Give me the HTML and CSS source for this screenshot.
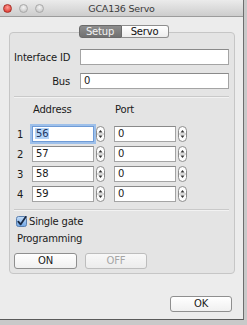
FILE: index.html
```html
<!DOCTYPE html>
<html lang="en">
<head>
    <meta charset="UTF-8">
    <meta name="viewport" content="width=device-width, initial-scale=1.0">
    <title>GCA136 Servo</title>
    <link rel="stylesheet" href="styles.css">
</head>
<body>
    <div class="window">
        <div class="titlebar">
            <div class="lights">
                <span class="light close"></span>
                <span class="light"></span>
                <span class="light"></span>
            </div>
            <div class="title">GCA136 Servo</div>
            <div></div>
        </div>

        <div class="content">
            <div class="tabs">
                <span class="tab active">Setup</span>
                <span class="tab">Servo</span>
            </div>

            <div class="group">
                <div class="form-row">
                    <span class="label">Interface ID</span>
                    <div class="field wide"></div>
                </div>
                <div class="form-row">
                    <span class="label">Bus</span>
                    <div class="field wide">0</div>
                </div>

                <div class="sep"></div>

                <div class="num-head">
                    <span class="h-address">Address</span>
                    <span>Port</span>
                </div>

                <div class="num-rows">
                    <div class="num-row">
                        <span class="num">1</span>
                        <div class="field small focused"><span class="selected">56</span></div>
                        <svg class="stepper" width="9" height="16" viewBox="0 0 9 16"><rect x="0.5" y="0.5" width="8" height="15" rx="4" fill="#fdfdfd" stroke="#8c8c8c"/><line x1="1" y1="8" x2="8" y2="8" stroke="#b5b5b5"/><path d="M4.5 4 L6.5 6.5 L2.5 6.5 Z" fill="#333"/><path d="M4.5 12 L6.5 9.5 L2.5 9.5 Z" fill="#333"/></svg>
                        <div class="field small port">0</div>
                        <svg class="stepper" width="9" height="16" viewBox="0 0 9 16"><rect x="0.5" y="0.5" width="8" height="15" rx="4" fill="#fdfdfd" stroke="#8c8c8c"/><line x1="1" y1="8" x2="8" y2="8" stroke="#b5b5b5"/><path d="M4.5 4 L6.5 6.5 L2.5 6.5 Z" fill="#333"/><path d="M4.5 12 L6.5 9.5 L2.5 9.5 Z" fill="#333"/></svg>
                    </div>
                    <div class="num-row">
                        <span class="num">2</span>
                        <div class="field small">57</div>
                        <svg class="stepper" width="9" height="16" viewBox="0 0 9 16"><rect x="0.5" y="0.5" width="8" height="15" rx="4" fill="#fdfdfd" stroke="#8c8c8c"/><line x1="1" y1="8" x2="8" y2="8" stroke="#b5b5b5"/><path d="M4.5 4 L6.5 6.5 L2.5 6.5 Z" fill="#333"/><path d="M4.5 12 L6.5 9.5 L2.5 9.5 Z" fill="#333"/></svg>
                        <div class="field small port">0</div>
                        <svg class="stepper" width="9" height="16" viewBox="0 0 9 16"><rect x="0.5" y="0.5" width="8" height="15" rx="4" fill="#fdfdfd" stroke="#8c8c8c"/><line x1="1" y1="8" x2="8" y2="8" stroke="#b5b5b5"/><path d="M4.5 4 L6.5 6.5 L2.5 6.5 Z" fill="#333"/><path d="M4.5 12 L6.5 9.5 L2.5 9.5 Z" fill="#333"/></svg>
                    </div>
                    <div class="num-row">
                        <span class="num">3</span>
                        <div class="field small">58</div>
                        <svg class="stepper" width="9" height="16" viewBox="0 0 9 16"><rect x="0.5" y="0.5" width="8" height="15" rx="4" fill="#fdfdfd" stroke="#8c8c8c"/><line x1="1" y1="8" x2="8" y2="8" stroke="#b5b5b5"/><path d="M4.5 4 L6.5 6.5 L2.5 6.5 Z" fill="#333"/><path d="M4.5 12 L6.5 9.5 L2.5 9.5 Z" fill="#333"/></svg>
                        <div class="field small port">0</div>
                        <svg class="stepper" width="9" height="16" viewBox="0 0 9 16"><rect x="0.5" y="0.5" width="8" height="15" rx="4" fill="#fdfdfd" stroke="#8c8c8c"/><line x1="1" y1="8" x2="8" y2="8" stroke="#b5b5b5"/><path d="M4.5 4 L6.5 6.5 L2.5 6.5 Z" fill="#333"/><path d="M4.5 12 L6.5 9.5 L2.5 9.5 Z" fill="#333"/></svg>
                    </div>
                    <div class="num-row">
                        <span class="num">4</span>
                        <div class="field small">59</div>
                        <svg class="stepper" width="9" height="16" viewBox="0 0 9 16"><rect x="0.5" y="0.5" width="8" height="15" rx="4" fill="#fdfdfd" stroke="#8c8c8c"/><line x1="1" y1="8" x2="8" y2="8" stroke="#b5b5b5"/><path d="M4.5 4 L6.5 6.5 L2.5 6.5 Z" fill="#333"/><path d="M4.5 12 L6.5 9.5 L2.5 9.5 Z" fill="#333"/></svg>
                        <div class="field small port">0</div>
                        <svg class="stepper" width="9" height="16" viewBox="0 0 9 16"><rect x="0.5" y="0.5" width="8" height="15" rx="4" fill="#fdfdfd" stroke="#8c8c8c"/><line x1="1" y1="8" x2="8" y2="8" stroke="#b5b5b5"/><path d="M4.5 4 L6.5 6.5 L2.5 6.5 Z" fill="#333"/><path d="M4.5 12 L6.5 9.5 L2.5 9.5 Z" fill="#333"/></svg>
                    </div>
                </div>

                <div class="sep sep-low"></div>

                <div class="check-row">
                    <svg class="checkbox" width="11" height="11" viewBox="0 0 11 11">
                        <defs>
                            <linearGradient id="cb" x1="0" y1="0" x2="0" y2="1">
                                <stop offset="0" stop-color="#c6def8"/>
                                <stop offset="1" stop-color="#6fa5e4"/>
                            </linearGradient>
                        </defs>
                        <rect x="0.5" y="0.5" width="10" height="10" rx="2" fill="url(#cb)" stroke="#5a7fae"/>
                        <path d="M2.3 5.6 L4.6 8.4 L9.8 0.8" fill="none" stroke="#1a2a44" stroke-width="1.8" stroke-linecap="round" stroke-linejoin="round"/>
                    </svg>
                    <span>Single gate</span>
                </div>

                <div class="prog-label">Programming</div>

                <div class="btn-row">
                    <span class="btn btn-on">ON</span>
                    <span class="btn btn-off">OFF</span>
                </div>
            </div>

            <div class="footer">
                <span class="btn btn-ok">OK</span>
            </div>
        </div>
    </div>
</body>
</html>
```

FILE: styles.css
```css
body {
    margin: 0;
    background: #c9c9c9;
    font-family: "DejaVu Sans", Verdana, sans-serif;
    font-size: 10px;
    letter-spacing: -0.2px;
    color: #1a1a1a;
}
.window {
    width: 244px;
    height: 320px;
    box-sizing: border-box;
    background: #ececec;
    border-right: 1px solid #6e6e6e;
    border-bottom: 1px solid #5a5a5a;
}
.titlebar {
    height: 16px;
    display: grid;
    grid-template-columns: 1fr auto 1fr;
    align-items: center;
    background: linear-gradient(#ebebeb, #cdcdcd);
    border-bottom: 1px solid #9c9c9c;
}
.lights {
    display: flex;
    gap: 7px;
    padding-left: 3px;
}
.light {
    width: 9px;
    height: 9px;
    border-radius: 50%;
    box-sizing: border-box;
    background: radial-gradient(circle at 50% 35%, #f4f4f4, #bdbdbd);
    border: 1px solid #a9a9a9;
}
.light.close {
    background: radial-gradient(circle at 50% 35%, #ff9c95, #d8251c);
    border-color: #a8322b;
}
.title {
    font-size: 9.5px;
    color: #3a3a3a;
}
.content {
    padding: 8px 8px 0 9px;
}
.tabs {
    display: flex;
    justify-content: center;
    margin-bottom: -6px;
    position: relative;
    padding-left: 3px;
}
.tab {
    height: 13px;
    line-height: 12px;
    box-sizing: border-box;
    text-align: center;
    border: 1px solid #8e8e8e;
    background: linear-gradient(#ffffff, #ededed);
    color: #111;
}
.tab:first-child {
    border-radius: 3px 0 0 3px;
    width: 43px;
}
.tab:last-child {
    border-radius: 0 3px 3px 0;
    border-left: none;
    width: 47px;
}
.tab.active {
    background: linear-gradient(#8d8d8d, #717171);
    border-color: #6a6a6a;
    color: #f2f2f2;
}
.group {
    background: #e4e4e4;
    border: 1px solid #c6c6c6;
    border-radius: 4px;
    padding: 16px 5px 4px 4px;
}
.form-row {
    display: flex;
    align-items: center;
    gap: 10px;
    margin-bottom: 8px;
}
.form-row:nth-child(2) {
    margin-bottom: 0;
}
.label {
    width: 56px;
    flex-shrink: 0;
    white-space: nowrap;
    text-align: right;
}
.field {
    height: 16px;
    line-height: 14px;
    box-sizing: border-box;
    padding-left: 3px;
    background: #fff;
    border: 1px solid #a4a4a4;
    border-top-color: #8a8a8a;
}
.wide {
    flex: 1;
}
.small {
    width: 62px;
}
.port {
    margin-left: 9px;
}
.focused {
    border-color: #6f9bd6;
    box-shadow: 0 0 0 2px #9ec0ea;
}
.selected {
    background: #b4d4f7;
    color: #1d3561;
    padding: 0 1px;
    margin-left: -1px;
}
.sep {
    height: 1px;
    background: #c9c9c9;
    border-bottom: 1px solid #f2f2f2;
    margin-top: 7px;
}
.sep-low {
    margin-top: 7px;
}
.num-head {
    display: flex;
    height: 12px;
    line-height: 12px;
    margin: 6px 0 10px;
    padding-left: 19px;
}
.h-address {
    width: 82px;
}
.num-rows {
    display: flex;
    flex-direction: column;
    gap: 4px;
}
.num-row {
    display: flex;
    align-items: center;
}
.num {
    width: 15px;
    padding-left: 3px;
}
.stepper {
    margin-left: 2px;
    display: block;
}
.check-row {
    display: flex;
    align-items: center;
    gap: 2px;
    height: 12px;
    margin-top: 4px;
    padding-left: 2px;
}
.checkbox {
    display: block;
}
.prog-label {
    height: 12px;
    line-height: 12px;
    margin-top: 6px;
    padding-left: 3px;
}
.btn-row {
    display: flex;
    gap: 8px;
    margin-top: 8px;
}
.btn {
    height: 16px;
    line-height: 14px;
    box-sizing: border-box;
    text-align: center;
    border: 1px solid #8f8f8f;
    border-radius: 3px;
    background: linear-gradient(#ffffff, #f0f0f0);
}
.btn-on {
    width: 63px;
}
.btn-off {
    width: 62px;
    color: #a6a6a6;
    border-color: #bdbdbd;
    background: linear-gradient(#f8f8f8, #ececec);
}
.footer {
    display: flex;
    justify-content: flex-end;
    padding-right: 3px;
    margin-top: 22px;
}
.btn-ok {
    width: 62px;
}
```
